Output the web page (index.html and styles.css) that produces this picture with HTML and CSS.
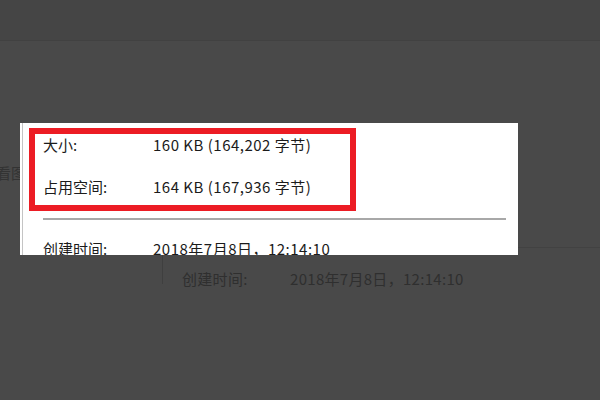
FILE: index.html
```html
<!DOCTYPE html>
<html lang="zh-CN">
<head>
    <meta charset="UTF-8">
    <title>属性</title>
    <link rel="stylesheet" href="styles.css">
</head>
<body>
    <div class="topbar"></div>

    <div class="stage">
        <!-- dimmed window behind the zoomed popup -->
        <div class="bg-tab">看图</div>
        <div class="bg-dialog">
            <span class="bg-label">创建时间:</span>
            <span class="bg-value">2018年7月8日，12:14:10</span>
        </div>

        <!-- zoomed properties panel -->
        <div class="panel">
            <div class="sheet">
                <div class="highlight">
                    <div class="row"><span class="label">大小:</span><span class="value">160 KB (164,202 字节)</span></div>
                    <div class="row"><span class="label">占用空间:</span><span class="value">164 KB (167,936 字节)</span></div>
                </div>
                <div class="divider"></div>
                <div class="row created"><span class="label">创建时间:</span><span class="value">2018年7月8日，12:14:10</span></div>
            </div>
        </div>
    </div>
</body>
</html>
```

FILE: styles.css
```css
body {
    margin: 0;
    width: 600px;
    height: 400px;
    overflow: hidden;
    background: #494949;
    font-family: "Noto Sans CJK SC", "Noto Sans", sans-serif;
    font-size: 14px;
}

.topbar { height: 40px; background: #454545; border-bottom: 1px solid #414141; }

.stage { position: relative; height: 359px; }

/* dimmed background window */
.bg-tab {
    position: absolute;
    left: -4px;
    top: 121px;
    color: #333;
    font-size: 15px;
    line-height: 22px;
}
.bg-dialog {
    position: absolute;
    left: 162px;
    top: 206px;
    width: 460px;
    height: 36px;
    border-left: 1px solid #3f3f3f;
    border-top: 1px solid #424242;
    color: #2f2f2f;
    font-size: 15px;
    letter-spacing: 0.3px;
}
.bg-label { position: absolute; left: 19px; top: 20px; line-height: 22px; }
.bg-value { position: absolute; left: 127px; top: 20px; line-height: 22px; }

/* zoomed popup */
.panel {
    position: absolute;
    left: 20px;
    top: 82px;
    width: 496px;
    height: 132px;
    padding-left: 2px;
    background: #fff;
    overflow: hidden;
    color: #1b1b1b;
}
.sheet {
    height: 100%;
    border-left: 1px solid #c4c4c4;
    padding: 5px 0 0 6px;
}
.highlight {
    width: 307px;
    border: 6px solid #ec1c24;
    padding: 0 0 7px 8px;
}
.row { display: flex; height: 22px; line-height: 22px; font-size: 15px; white-space: nowrap; }
.row + .row { margin-top: 20px; }
.label { width: 110px; }
.value { letter-spacing: 0.5px; }
.divider {
    height: 2px;
    background: #a8a8a8;
    margin: 7px 12px 0 14px;
}
.row.created { margin: 18px 0 0 14px; }
```
